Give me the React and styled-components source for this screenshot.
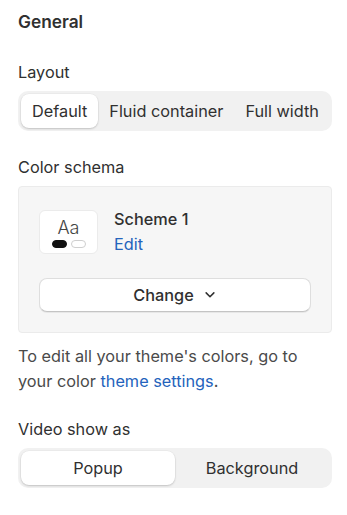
import styled, { createGlobalStyle } from "styled-components";
import { useState } from "react";

const GlobalStyle = createGlobalStyle`
  * { box-sizing: border-box; }
  body {
    margin: 0;
    background: #ffffff;
    font-family: Inter, "Noto Sans", sans-serif;
    color: #303030;
    -webkit-font-smoothing: antialiased;
  }
`;

const Panel = styled.div`
  width: 347px;
  padding: 10px 15px 20px 18px;
  display: flex;
  flex-direction: column;
`;

const Title = styled.h2`
  margin: 0;
  font-size: 17.3px;
  font-weight: 600;
  line-height: 24px;
  color: #303030;
`;

const Field = styled.div`
  display: flex;
  flex-direction: column;
  margin-top: ${(p) => p.$top || 0}px;
`;

const Label = styled.div`
  font-size: 16.3px;
  line-height: 20px;
  margin-bottom: 9px;
  color: #303030;
`;

const Segmented = styled.div`
  display: flex;
  height: 40px;
  padding: 3px;
  border-radius: 10px;
  background: #f1f1f1;
`;

const Segment = styled.button`
  flex: ${(p) => (p.$fill ? "1 1 0" : "none")};
  border: none;
  padding: 0 11px;
  font-family: inherit;
  font-size: 16.3px;
  color: #303030;
  border-radius: 8px;
  white-space: nowrap;
  cursor: pointer;
  background: ${(p) => (p.$active ? "#ffffff" : "transparent")};
  box-shadow: ${(p) =>
    p.$active ? "0 1px 2px rgba(0,0,0,0.18), 0 0 0 0.5px rgba(0,0,0,0.04)" : "none"};
`;

const Card = styled.div`
  background: #f6f6f6;
  border: 1px solid #ebebeb;
  border-radius: 4px;
  padding: 23px 20px 20px;
  display: flex;
  flex-direction: column;
  gap: 24px;
`;

const SchemeRow = styled.div`
  display: flex;
  gap: 16px;
  align-items: flex-start;
`;

const Swatch = styled.div`
  width: 59px;
  height: 44px;
  background: #ffffff;
  border: 1px solid #ebebeb;
  border-radius: 6px;
  display: flex;
  flex-direction: column;
  align-items: center;
  justify-content: center;
  padding-top: 2px;
`;

const SwatchText = styled.div`
  font-size: 18px;
  font-weight: 350;
  line-height: 19px;
  color: #444444;
`;

const Pills = styled.div`
  display: flex;
  gap: 4px;
  margin-top: 3px;
`;

const Pill = styled.span`
  width: 15px;
  height: 8px;
  border-radius: 4px;
  background: ${(p) => (p.$filled ? "#111111" : "#ffffff")};
  border: 1px solid ${(p) => (p.$filled ? "#111111" : "#cfcfcf")};
`;

const SchemeInfo = styled.div`
  display: flex;
  flex-direction: column;
`;

const SchemeName = styled.div`
  font-size: 16.3px;
  font-weight: 450;
  line-height: 20px;
  margin-top: -1px;
  color: #303030;
`;

const Link = styled.a`
  color: #2463bc;
  text-decoration: none;
  cursor: pointer;
`;

const EditLink = styled(Link)`
  font-size: 16.3px;
  line-height: 20px;
  margin-top: 5px;
`;

const ChangeButton = styled.button`
  height: 34px;
  width: 100%;
  background: #ffffff;
  border: 1px solid #dedede;
  border-bottom-color: #c4c4c4;
  border-radius: 8px;
  font-family: inherit;
  font-size: 16.3px;
  font-weight: 450;
  color: #303030;
  display: flex;
  align-items: center;
  justify-content: center;
  gap: 9px;
  box-shadow: 0 1px 0 rgba(0,0,0,0.06);
  cursor: pointer;
`;

const Help = styled.p`
  margin: 11px 0 0;
  padding-right: 12px;
  font-size: 16.3px;
  line-height: 25px;
  color: #4a4a4a;
`;

const Chevron = () => (
  <svg width="14" height="14" viewBox="0 0 20 20" fill="none">
    <path
      d="M4.5 7l5.5 5.5 5.5-5.5"
      stroke="#303030"
      strokeWidth="2.2"
      strokeLinecap="round"
      strokeLinejoin="round"
    />
  </svg>
);

export default function App() {
  const [layout, setLayout] = useState("Default");
  const [video, setVideo] = useState("Popup");
  return (
    <>
      <GlobalStyle />
      <Panel>
        <Title>General</Title>

        <Field $top={28}>
          <Label>Layout</Label>
          <Segmented>
            {["Default", "Fluid container", "Full width"].map((o) => (
              <Segment key={o} $active={layout === o} onClick={() => setLayout(o)}>
                {o}
              </Segment>
            ))}
          </Segmented>
        </Field>

        <Field $top={26}>
          <Label>Color schema</Label>
          <Card>
            <SchemeRow>
              <Swatch>
                <SwatchText>Aa</SwatchText>
                <Pills>
                  <Pill $filled />
                  <Pill />
                </Pills>
              </Swatch>
              <SchemeInfo>
                <SchemeName>Scheme 1</SchemeName>
                <EditLink>Edit</EditLink>
              </SchemeInfo>
            </SchemeRow>
            <ChangeButton>
              Change <Chevron />
            </ChangeButton>
          </Card>
        </Field>

        <Help>
          To edit all your theme's colors, go to your color <Link>theme settings</Link>.
        </Help>

        <Field $top={25}>
          <Label>Video show as</Label>
          <Segmented>
            {["Popup", "Background"].map((o) => (
              <Segment key={o} $fill $active={video === o} onClick={() => setVideo(o)}>
                {o}
              </Segment>
            ))}
          </Segmented>
        </Field>
      </Panel>
    </>
  );
}
